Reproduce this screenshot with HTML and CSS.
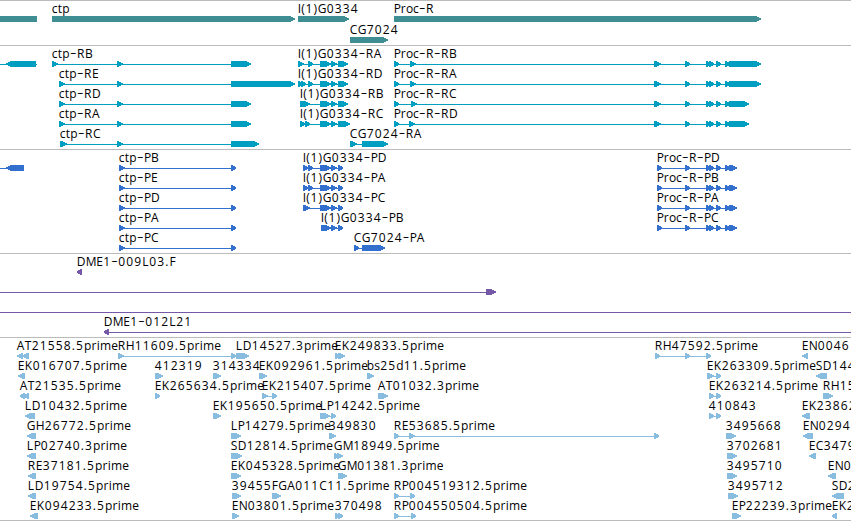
FILE: index.html
```html
<!DOCTYPE html>
<html lang="en">
<head>
<meta charset="utf-8">
<title>Genome browser</title>
<link rel="stylesheet" href="styles.css">
</head>
<body>
<main class="browser">
  <section class="track track-gene"><svg id="genes" width="851" height="44" viewBox="0 1 851 44"></svg></section>
  <section class="track track-transcript"><svg id="transcripts" width="851" height="103" viewBox="0 46 851 103"></svg></section>
  <section class="track track-cds"><svg id="cds" width="851" height="103" viewBox="0 150 851 103"></svg></section>
  <section class="track track-bac"><svg id="bacs" width="851" height="83" viewBox="0 254 851 83"></svg></section>
  <section class="track track-est"><svg id="ests" width="851" height="182" viewBox="0 338 851 182"></svg></section>
</main>
<script src="tracks.js"></script>
</body>
</html>
```
FILE: styles.css
```css
body {
  margin: 0;
  background: #fff;
  overflow: hidden;
}

.browser {
  display: flex;
  flex-direction: column;
  width: 851px;
  border-bottom: 1px solid #bbb;
}

.track {
  border-top: 1px solid #bbb;
}

.track svg {
  display: block;
}

.track-gene { color: #3f8e94; }
.track-transcript { color: #009fc1; }
.track-cds { color: #336fcc; }
.track-bac { color: #7558a8; }
.track-est { color: #88bddf; }

.glyph {
  fill: currentColor;
  shape-rendering: crispEdges;
}

.label {
  fill: #000;
  font-family: "Open Sans", "Noto Sans", sans-serif;
  font-size: 12px;
}

.dash {
  font-size: 20px;
  font-weight: 300;
}
```
FILE: tracks.js
```js
// Feature: [baseline, label, "start-end ..." blocks, options]
// options: rev = reverse strand, line = [from, to] connector, flat = no arrowhead
const PROC_TAIL = ' 654-661 685-690 706-711 709-714 716-721 725-730 ';
const PROC_CDS = '657-662 685-690 706-711 709-714 716-721 725-730 729-737';
const R = { rev: true };

const tracks = {
  genes: [
    [13, '', '-10-37', { flat: true }],
    [13, 'ctp', '52-295'],
    [13, 'I(1)G0334', '298-349'],
    [34, 'CG7024', '350-388'],
    [13, 'Proc-R', '394-761']
  ],
  transcripts: [
    [58, '', '6-36', { rev: true, line: [-10, 37] }],
    [58, 'ctp-RB', '52-58 117-123 231-251'],
    [78, 'ctp-RE', '59-65 117-123 231-295'],
    [98, 'ctp-RD', '59-65 117-123 231-251'],
    [118, 'ctp-RA', '59-65 117-123 231-251'],
    [138, 'ctp-RC', '60-67 117-123 231-259'],
    [58, 'I(1)G0334-RA', '298-304 308-313 320-331 331-337 338-348'],
    [78, 'I(1)G0334-RD', '298-303 301-306 308-313 320-331 331-337 338-348'],
    [98, 'I(1)G0334-RB', '300-310 320-331 331-337 338-348'],
    [118, 'I(1)G0334-RC', '300-305 305-310 320-331 331-337 338-350'],
    [138, 'CG7024-RA', '350-357 362-388'],
    [58, 'Proc-R-RB', '394-399 410-416' + PROC_TAIL + '729-761'],
    [78, 'Proc-R-RA', '394-399 410-416' + PROC_TAIL + '729-761'],
    [98, 'Proc-R-RC', '394-399 411-417' + PROC_TAIL + '729-749'],
    [118, 'Proc-R-RD', '394-399 409-415' + PROC_TAIL + '729-749']
  ],
  cds: [
    [162, '', '6-24', { rev: true, line: [-10, 24] }],
    [162, 'ctp-PB', '119-125 231-236'],
    [182, 'ctp-PE', '119-125 231-236'],
    [202, 'ctp-PD', '119-125 231-236'],
    [222, 'ctp-PA', '119-125 231-236'],
    [242, 'ctp-PC', '119-125 231-236'],
    [162, 'I(1)G0334-PD', '303-308 308-313 320-331 331-337 338-343'],
    [182, 'I(1)G0334-PA', '303-308 308-313 320-331 331-337 338-343'],
    [202, 'I(1)G0334-PC', '303-310 320-331 331-337 338-343'],
    [222, 'I(1)G0334-PB', '321-331 331-337 338-343'],
    [242, 'CG7024-PA', '354-359 362-385'],
    [162, 'Proc-R-PD', PROC_CDS],
    [182, 'Proc-R-PB', PROC_CDS],
    [202, 'Proc-R-PA', PROC_CDS],
    [222, 'Proc-R-PC', PROC_CDS]
  ],
  bacs: [
    [266, 'DME1-009L03.F', '77-82', R],
    [286, '', '486-496', { line: [-10, 490] }],
    [306, '', '', { line: [-10, 861] }],
    [326, 'DME1-012L21', '104-109', { rev: true, line: [106, 861] }]
  ],
  ests: [
    [350, 'AT21558.5prime', '17-23 22-29', R],
    [370, 'EK016707.5prime', '18-25', R],
    [390, 'AT21535.5prime', '20-25 23-29', R],
    [410, 'LD10432.5prime', '25-35', R],
    [430, 'GH26772.5prime', '27-36', R],
    [450, 'LP02740.3prime', '27-36', R],
    [470, 'RE37181.5prime', '28-36', R],
    [490, 'LD19754.5prime', '28-36', R],
    [510, 'EK094233.5prime', '30-38', R],
    [350, 'RH11609.5prime', '118-124 231-236'],
    [370, '412319', '155-163'],
    [390, 'EK265634.5prime', '155-160'],
    [370, '314334', '213-221'],
    [410, 'EK195650.5prime', '213-221'],
    [350, 'LD14527.3prime', '236-249'],
    [370, 'EK092961.5prime', '259-267'],
    [390, 'EK215407.5prime', '262-268 272-277'],
    [410, 'LP14242.5prime', '320-330 331-336'],
    [430, 'LP14279.5prime', '231-241'],
    [450, 'SD12814.5prime', '231-242'],
    [470, 'EK045328.5prime', '231-241'],
    [490, '39455', '232-241'],
    [490, 'FGA011C11.5prime', '272-281'],
    [510, 'EN03801.5prime', '232-239'],
    [350, 'EK249833.5prime', '335-340 338-345'],
    [370, 'bs25d11.5prime', '367-374'],
    [390, 'AT01032.3prime', '378-388'],
    [430, '349830', '329-336'],
    [450, 'GM18949.5prime', '334-339 337-343'],
    [470, 'GM01381.3prime', '338-347'],
    [510, '370498', '335-340 338-343'],
    [430, 'RE53685.5prime', '394-399 409-415 654-659'],
    [490, 'RP004519312.5prime', '394-399 410-415'],
    [510, 'RP004550504.5prime', '394-399 411-416'],
    [350, 'RH47592.5prime', '655-660 685-690 706-711'],
    [370, 'EK263309.5prime', '707-714 716-721'],
    [390, 'EK263214.5prime', '709-714 716-721'],
    [410, '410843', '709-714 716-721'],
    [430, '3495668', '726-736'],
    [450, '3702681', '727-737'],
    [470, '3495710', '727-737'],
    [490, '3495712', '728-738'],
    [510, 'EP22239.3prime', '732-741'],
    [350, 'EN0046', '802-808', R],
    [370, 'SD144', '816-827', R],
    [390, 'RH15', '823-833'],
    [410, 'EK23862', '802-810', R],
    [430, 'EN0294', '803-813', R],
    [450, 'EC3479', '809-816', R],
    [470, 'EN0', '828-836', R],
    [490, 'SD2', '832-844', R],
    [510, 'EK2', '832-837', R]
  ]
};

// Character advances in pixels; digits are 8 wide.
const ADVANCE = {
  A: 8, B: 7, C: 8, D: 9, E: 7, F: 6.5, G: 9, H: 9, I: 3.4, K: 8, L: 7,
  M: 10.5, N: 9, P: 7, R: 8, S: 7, T: 7, b: 7.5, c: 6, d: 7.5, e: 7, i: 3.2,
  m: 11.2, o: 7, p: 7.6, r: 5.2, s: 6, t: 4.5, '-': 7, '.': 4.2, '(': 4.3, ')': 4.3
};

const NS = 'http://www.w3.org/2000/svg';

function add(parent, tag, attrs) {
  const el = document.createElementNS(NS, tag);
  for (const key in attrs) el.setAttribute(key, attrs[key]);
  parent.appendChild(el);
  return el;
}

function block(a, b, y, opts) {
  const t = y + 3, m = y + 5.4, z = y + 9;
  if (opts.flat) return `M${a} ${t}H${b}V${z}H${a}Z`;
  const head = Math.min(5, b - a - 1.5);
  return opts.rev
    ? `M${b} ${t}H${a + head}L${a} ${m}V${m + 1.2}L${a + head} ${z}H${b}Z`
    : `M${a} ${t}H${b - head}L${b} ${m}V${m + 1.2}L${b - head} ${z}H${a}Z`;
}

function label(svg, name, left, y) {
  const xs = [];
  const dys = [];
  let x = left;
  let dropped = false;
  for (const ch of name) {
    const dash = ch === '-';
    xs.push(x.toFixed(1));
    dys.push(dash === dropped ? 0 : dash ? 1 : -1);
    dropped = dash;
    x += ADVANCE[ch] || 8;
  }
  const text = add(svg, 'text', { class: 'label', x: xs.join(' '), y, dy: dys.join(' ') });
  for (const part of name.split(/(-)/)) {
    if (part === '-') add(text, 'tspan', { class: 'dash' }).textContent = part;
    else text.appendChild(document.createTextNode(part));
  }
}

for (const id in tracks) {
  const svg = document.getElementById(id);
  for (const [y, name, spans, opts = {}] of tracks[id]) {
    const blocks = (spans.match(/-?\d+-\d+/g) || [])
      .map(s => s.match(/(-?\d+)-(\d+)/).slice(1).map(Number));
    let line = opts.line;
    if (!line && blocks.length > 1) line = [blocks[0][0], blocks[blocks.length - 1][0] + 1];
    if (line) add(svg, 'path', { class: 'glyph', d: `M${line[0]} ${y + 6}H${line[1]}V${y + 7}H${line[0]}Z` });
    for (const [a, b] of blocks) add(svg, 'path', { class: 'glyph', d: block(a, b, y, opts) });
    if (name) label(svg, name, blocks[0][0] - 0.2, y);
  }
}
```
